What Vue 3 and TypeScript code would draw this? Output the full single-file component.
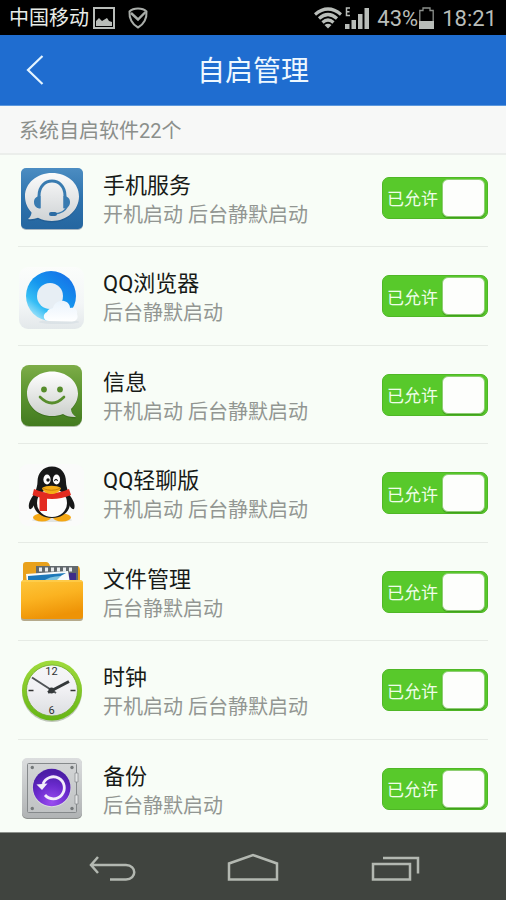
<script setup lang="ts">
import { reactive } from 'vue'

type IconName = 'service' | 'browser' | 'message' | 'penguin' | 'folder' | 'clock' | 'backup'

interface AppEntry {
  id: IconName
  name: string
  modes: string
  allowed: boolean
}

const total = 22
const apps = reactive<AppEntry[]>([
  { id: 'service', name: '手机服务', modes: '开机启动 后台静默启动', allowed: true },
  { id: 'browser', name: 'QQ浏览器', modes: '后台静默启动', allowed: true },
  { id: 'message', name: '信息', modes: '开机启动 后台静默启动', allowed: true },
  { id: 'penguin', name: 'QQ轻聊版', modes: '开机启动 后台静默启动', allowed: true },
  { id: 'folder', name: '文件管理', modes: '后台静默启动', allowed: true },
  { id: 'clock', name: '时钟', modes: '开机启动 后台静默启动', allowed: true },
  { id: 'backup', name: '备份', modes: '后台静默启动', allowed: true },
])
</script>

<template>
  <div class="screen">
    <div class="status">
      <span class="carrier">中国移动</span>
      <svg class="ic-photo" width="22" height="22" viewBox="0 0 22 22" aria-hidden="true">
        <rect x="1" y="1" width="20" height="20" fill="none" stroke="#b9bdb9" stroke-width="2" />
        <path d="M3 19v-5l3-3 3 3 5-3 2 3 3 1v4z" fill="#b9bdb9" />
      </svg>
      <svg class="ic-shield" width="20" height="22" viewBox="0 0 20 22" aria-hidden="true">
        <path d="M10 1.500C13 1.500 16.500 2.500 18.500 4.500C19 11 16 17.500 10 20.500C4 17.500 1 11 1.500 4.500C3.500 2.500 7 1.500 10 1.500z" fill="none" stroke="#a9ada9" stroke-width="2" />
        <path d="M3 6l7 6.500L17.500 5" fill="none" stroke="#a9ada9" stroke-width="2.400" />
      </svg>
      <span class="spacer"></span>
      <svg width="28" height="22" viewBox="0 0 28 22" aria-hidden="true">
        <g fill="none" stroke="#b9bdb9" stroke-width="3.200">
          <path d="M1 7.500Q14 -3.500 27 7.500" />
          <path d="M5 11.500Q14 3.500 23 11.500" />
          <path d="M8.500 15.500Q14 10.500 19.500 15.500" />
        </g>
        <path d="M10.500 18Q14 15.500 17.500 18L14 21.500z" fill="#b9bdb9" />
      </svg>
      <svg class="ic-signal" width="26" height="22" viewBox="0 0 26 22" aria-hidden="true">
        <path d="M6 1H2.500V8.500H6M2.500 4.700H5.500" fill="none" stroke="#b9bdb9" stroke-width="1.500" />
        <path d="M1 17h4.500v5H1zM7.500 13H12v9H7.500zM14 7h4.500v15H14zM20.500 1H25v21h-4.500z" fill="#b9bdb9" />
      </svg>
      <span class="digits">43%</span>
      <svg class="ic-battery" width="15" height="22" viewBox="0 0 15 22" aria-hidden="true">
        <path d="M.8 21V3.500H4V1h7v2.500h3.200V21z" fill="none" stroke="#8c908c" stroke-width="1.300" />
        <path d="M0 14h15v8H0z" fill="#b9bdb9" />
      </svg>
      <span class="digits time">18:21</span>
    </div>

    <header class="bar">
      <button class="back" type="button" aria-label="返回">
        <svg width="18" height="30" viewBox="0 0 18 30" aria-hidden="true">
          <path d="M16.500 1L2 15l14.500 14" fill="none" stroke="#e4f4ff" stroke-width="2.200" />
        </svg>
      </button>
      <h1>自启管理</h1>
    </header>

    <h2 class="section">系统自启软件{{ total }}个</h2>

    <main class="scroll">
      <ul class="apps">
        <li v-for="app in apps" :key="app.id" class="row">
          <svg class="icon" viewBox="0 0 66 66" aria-hidden="true">
            <template v-if="app.id === 'service'">
              <defs>
                <linearGradient id="svcBg" x1="0" y1="0" x2="0" y2="1">
                  <stop offset="0" stop-color="#4c8dc2" /><stop offset=".5" stop-color="#2d72ad" /><stop offset="1" stop-color="#2566a0" />
                </linearGradient>
                <linearGradient id="svcBubble" x1="0" y1="0" x2="0" y2="1">
                  <stop offset="0" stop-color="#fbfbfb" /><stop offset="1" stop-color="#cfd3d5" />
                </linearGradient>
              </defs>
              <rect x="3" y="4" width="62" height="61" rx="5" fill="#a9b7c2" />
              <rect x="3" y="3" width="62" height="61" rx="5" fill="url(#svcBg)" />
              <path d="M34 9C49 9 61 19 61 32.500C61 46 49 57.500 34 57.500C29 57.500 24 56.500 20 54.300C17 55.600 13 56 10 55.500C12.500 53 13.500 50 13.500 48C9.500 44 7 38.500 7 32.500C7 19 19 9 34 9z" fill="#1d5488" opacity=".5" />
              <path d="M34 8C49 8 61 18 61 31.500C61 45 49 56 34 56C29 56 24 55 20 52.800C17 54 13 54.500 10 54C12.500 52 13.500 49.500 13.500 47.500C9.500 43 7 38 7 31.500C7 18 19 8 34 8z" fill="url(#svcBubble)" />
              <path d="M21 43V31C21 11 47 11 47 31V43" fill="none" stroke="#397bb0" stroke-width="3" />
              <path d="M22.500 31C18.500 31 16 33.500 16 37C16 41 18.500 43.500 22.500 43.500zM45.500 31C49.500 31 52 33.500 52 37C52 41 49.500 43.500 45.500 43.500z" fill="#397bb0" />
              <path d="M49 42Q46 48 37 49" fill="none" stroke="#397bb0" stroke-width="1.600" />
              <rect x="31" y="47" width="8" height="4" rx="2" fill="#2d6ca3" />
            </template>

            <template v-else-if="app.id === 'browser'">
              <defs>
                <linearGradient id="brTile" x1="0" y1="0" x2="0" y2="1">
                  <stop offset="0" stop-color="#fbfdfb" /><stop offset=".6" stop-color="#f3f6f7" /><stop offset="1" stop-color="#e3e8ea" />
                </linearGradient>
                <linearGradient id="brRing" x1=".9" y1=".1" x2=".2" y2="1">
                  <stop offset="0" stop-color="#1672e8" /><stop offset=".45" stop-color="#1596ee" /><stop offset=".75" stop-color="#35bdf5" /><stop offset="1" stop-color="#b5eafa" />
                </linearGradient>
                <linearGradient id="brCloud" x1="0" y1="0" x2="0" y2="1">
                  <stop offset="0" stop-color="#e9f3fc" /><stop offset="1" stop-color="#ffffff" />
                </linearGradient>
              </defs>
              <rect x="1" y="4" width="65" height="62" rx="9" fill="url(#brTile)" />
              <ellipse cx="41" cy="59" rx="20" ry="2" fill="#cfd9df" opacity=".5" />
              <circle cx="33" cy="33" r="25" fill="url(#brRing)" />
              <circle cx="32" cy="33" r="13" fill="#e7eef4" />
              <path d="M31 58C25 58 24 51 29 49C30 46 33 45 35 45C36 40 41 37 46 38C50 39 52 42 52 45C57 44 60 47 59 51C61 55 58 58.500 54 58.500z" fill="url(#brCloud)" />
            </template>

            <template v-else-if="app.id === 'message'">
              <defs>
                <linearGradient id="msgBg" x1="0" y1="0" x2="0" y2="1">
                  <stop offset="0" stop-color="#7dad48" /><stop offset=".45" stop-color="#5c9530" /><stop offset="1" stop-color="#437b20" />
                </linearGradient>
                <linearGradient id="msgBubble" x1="0" y1="0" x2="0" y2="1">
                  <stop offset="0" stop-color="#ffffff" /><stop offset="1" stop-color="#cbcfcb" />
                </linearGradient>
              </defs>
              <rect x="3" y="4" width="61" height="61" rx="8" fill="#b1bfa7" />
              <rect x="3" y="3" width="61" height="61" rx="8" fill="url(#msgBg)" />
              <path d="M34 11C48 11 60 20 60 32.500C60 39 57 44 53 48C53 51 55 54 58 56.500C53 56.500 48 55 45 53C41 54.500 38 55 34 55C20 55 9 45 9 32.500C9 20 20 11 34 11z" fill="#2f6015" opacity=".55" />
              <path d="M34 9.500C48 9.500 60 19 60 31.500C60 38 57 43 53 47C53 50 55 53 58 55C53 55.500 48 54 45 52C41 53.500 38 54 34 54C20 54 9 44 9 31.500C9 19 20 9.500 34 9.500z" fill="url(#msgBubble)" />
              <circle cx="26" cy="27.500" r="2.900" fill="#578d2c" />
              <circle cx="42" cy="27.500" r="2.900" fill="#578d2c" />
              <path d="M22 35Q34 47 46 35" fill="none" stroke="#578d2c" stroke-width="2.600" stroke-linecap="round" />
            </template>

            <template v-else-if="app.id === 'penguin'">
              <rect x="1" y="4" width="65" height="62" rx="9" fill="#fafbfa" />
              <ellipse cx="34" cy="60" rx="20" ry="2" fill="#e2e4e2" />
              <ellipse cx="24" cy="57.500" rx="9" ry="4" fill="#f4a713" />
              <ellipse cx="44" cy="57.500" rx="9" ry="4" fill="#f4a713" />
              <path d="M17 33C12 39 9.500 45 11.500 49C13.500 50 16 46 17 43zM50 33C55 39 58 45 56 49C54 50 51.500 46 50 43z" fill="#171818" />
              <path d="M34 6.500C43 6.500 48 13 48 22C48 28 52 34 52 43C52 52 44 58 34 58C24 58 15.500 52 15.500 43C15.500 34 19.500 28 19.500 22C19.500 13 25 6.500 34 6.500z" fill="#171818" />
              <ellipse cx="34" cy="43" rx="15" ry="14" fill="#fdfdfd" />
              <ellipse cx="29" cy="19.500" rx="3.600" ry="5" fill="#fff" />
              <ellipse cx="38.500" cy="19.500" rx="3.600" ry="5" fill="#fff" />
              <circle cx="30" cy="20" r="1.700" fill="#171818" />
              <path d="M36.500 21Q38 17.500 39.500 21" fill="none" stroke="#171818" stroke-width="1.200" />
              <path d="M16 29Q34 37 51 29L53 35Q34 43 14.500 35z" fill="#e32b20" />
              <path d="M21.500 37H29V51H21.500z" fill="#e32b20" />
              <path d="M24 28C28 25 39 25 43 28C42 32 37 34 33.500 34C30 34 25 32 24 28z" fill="#f5ad17" />
              <path d="M25 28.500Q33.500 32 42 28.500" fill="none" stroke="#b87506" stroke-width=".8" />
            </template>

            <template v-else-if="app.id === 'folder'">
              <defs>
                <linearGradient id="fdFront" x1="0" y1="0" x2=".3" y2="1">
                  <stop offset="0" stop-color="#fdc63b" /><stop offset=".5" stop-color="#fbb321" /><stop offset="1" stop-color="#ee9306" />
                </linearGradient>
              </defs>
              <path d="M5 24V6Q5 3 8 3H28Q31 3 32 7H59Q62 7 62 12V24z" fill="#e9a11b" />
              <path d="M18 7H60V25H18z" fill="#62696d" />
              <path d="M21 8.500h3v4h-3zM27 8.500h3v4h-3zM33 8.500h3v4h-3zM39 8.500h3v4h-3zM45 8.500h3v4h-3zM51 8.500h3v4h-3z" fill="#e9edef" />
              <path d="M51 14h7v9h-7z" fill="#3d2c88" />
              <path d="M8 15L50 12L52 24H9z" fill="#f8fbfc" />
              <path d="M10 17L48 14L39 19Q31 20 27 23H10z" fill="#1d78b9" />
              <path d="M24 23Q31 17 43 17L37 23z" fill="#7ec3df" />
              <rect x="3" y="22" width="62" height="40" rx="3" fill="#b5aa8c" />
              <rect x="3" y="21" width="62" height="39" rx="3" fill="url(#fdFront)" />
              <path d="M4 22H64" stroke="#ffd760" stroke-width="1" />
            </template>

            <template v-else-if="app.id === 'clock'">
              <defs>
                <linearGradient id="ckRim" x1="0" y1="0" x2="0" y2="1">
                  <stop offset="0" stop-color="#a0db3c" /><stop offset="1" stop-color="#65b514" />
                </linearGradient>
                <linearGradient id="ckFace" x1="0" y1="0" x2="0" y2="1">
                  <stop offset="0" stop-color="#f6f7f8" /><stop offset=".5" stop-color="#f0f0f3" /><stop offset="1" stop-color="#dcdee1" />
                </linearGradient>
              </defs>
              <circle cx="34" cy="35" r="30" fill="#bfc7ba" />
              <circle cx="34" cy="33.500" r="30" fill="url(#ckRim)" />
              <circle cx="34" cy="33.500" r="25.500" fill="url(#ckFace)" stroke="#6fa82a" stroke-width=".8" />
              <text x="33.500" y="18" class="dial">12</text>
              <text x="33.500" y="57" class="dial">6</text>
              <path d="M10.500 33.500h5M52.500 33.500h5" stroke="#333" stroke-width="1.500" />
              <path d="M14 20.500L38 36" stroke="#505457" stroke-width="2" />
              <path d="M30 35.500L51 24.500" stroke="#34383a" stroke-width="3" />
              <circle cx="33.500" cy="33.500" r="3" fill="#34383a" />
            </template>

            <template v-else>
              <defs>
                <linearGradient id="bkBox" x1="0" y1="0" x2="0" y2="1">
                  <stop offset="0" stop-color="#dcdedf" /><stop offset="1" stop-color="#b0b3b4" />
                </linearGradient>
                <linearGradient id="bkDoor" x1="0" y1="0" x2="0" y2="1">
                  <stop offset="0" stop-color="#d3d5d6" /><stop offset="1" stop-color="#c0c3c4" />
                </linearGradient>
                <radialGradient id="bkDisc" cx=".5" cy=".9" r=".8">
                  <stop offset="0" stop-color="#9a4cf0" /><stop offset=".6" stop-color="#6829cb" /><stop offset="1" stop-color="#4c1ea6" />
                </radialGradient>
              </defs>
              <rect x="4" y="3" width="60" height="60" rx="5" fill="#8d908e" />
              <rect x="4" y="2" width="60" height="60" rx="5" fill="url(#bkBox)" />
              <rect x="9.500" y="7.500" width="49" height="49" rx="1" fill="url(#bkDoor)" stroke="#85898b" />
              <g fill="#74787a">
                <circle cx="14.300" cy="11.500" r="1.700" /><circle cx="54" cy="11.500" r="1.700" />
                <circle cx="14.300" cy="52.500" r="1.700" /><circle cx="54" cy="52.500" r="1.700" />
              </g>
              <path d="M57 17h3v9h-3zM57 39h3v9h-3z" fill="#e3e5e6" stroke="#84888a" stroke-width=".7" />
              <circle cx="33.700" cy="32" r="19.300" fill="#d9dade" />
              <circle cx="33.700" cy="31.500" r="18.800" fill="url(#bkDisc)" />
              <path d="M25 28A11 11 0 1 1 27 39" fill="none" stroke="#f2eefa" stroke-width="2.800" />
              <path d="M18.500 28.500L29.500 27.500L24 34z" fill="#f2eefa" />
            </template>
          </svg>

          <div class="info">
            <h3>{{ app.name }}</h3>
            <p>{{ app.modes }}</p>
          </div>

          <label class="toggle" :class="{ off: !app.allowed }">
            <span>已允许</span>
            <input v-model="app.allowed" type="checkbox" role="switch" />
          </label>
        </li>
      </ul>
    </main>

    <nav class="keys">
      <button type="button" aria-label="后退">
        <svg width="52" height="32" viewBox="0 0 52 32" aria-hidden="true">
          <path d="M12 6L5 14l7 8M5 14H40C51 14 51 28.500 40 28.500H24" />
        </svg>
      </button>
      <button type="button" aria-label="主屏幕">
        <svg width="52" height="32" viewBox="0 0 52 32" aria-hidden="true">
          <path d="M2 28.500V12.500L26 4L50 12.500V28.500z" />
        </svg>
      </button>
      <button type="button" aria-label="最近任务">
        <svg width="52" height="32" viewBox="0 0 52 32" aria-hidden="true">
          <path d="M5 13H42V28.500H5zM15 7H50V22.500" />
        </svg>
      </button>
    </nav>
  </div>
</template>

<style>
body {
  margin: 0;
  background: #f8fdf7;
}
</style>

<style scoped>
.screen {
  display: flex;
  flex-direction: column;
  height: 100vh;
  overflow: hidden;
  background: #f8fdf7;
  color: #171a17;
  font-family: Roboto, "Noto Sans CJK SC", sans-serif;
}

h1,
h2,
h3,
p,
ul {
  margin: 0;
  padding: 0;
  font-weight: 400;
}

button {
  padding: 0;
  border: 0;
  background: none;
  cursor: pointer;
}

svg {
  display: block;
  flex: none;
}

.status {
  display: flex;
  align-items: center;
  flex: none;
  height: 35px;
  padding: 0 9px;
  background: #000;
}

.carrier {
  color: #e8ece8;
  font-size: 20px;
  line-height: 36px;
}

.ic-photo {
  margin-left: 4px;
}

.ic-shield {
  margin-left: 13px;
}

.spacer {
  flex: 1;
}

.ic-signal {
  margin: 0 7px 0 2px;
}

.digits {
  padding-top: 2px;
  color: #b9bdb9;
  font-size: 22px;
  line-height: 36px;
}

.ic-battery {
  margin: 0 8px 0 1px;
}

.bar {
  display: grid;
  grid-template-columns: 70px 1fr 70px;
  align-items: center;
  flex: none;
  height: 70px;
  border-bottom: 1px solid #5c98dd;
  background: #1f6dd0;
}

.back {
  display: grid;
  place-items: center;
  height: 70px;
}

.bar h1 {
  padding-top: 4px;
  color: #eef8ff;
  font-size: 28px;
  line-height: 40px;
  text-align: center;
}

.section {
  flex: none;
  padding: 4px 19px 0;
  border-bottom: 2px solid #ebeeeb;
  background: #f7f8f7;
  color: #8b8f8b;
  font-size: 20px;
  line-height: 43px;
}

.scroll {
  flex: 1;
  min-height: 0;
  overflow-y: auto;
  scrollbar-width: none;
}

.apps {
  margin-top: -6px;
  padding: 0 18px;
  list-style: none;
}

.row {
  display: flex;
  align-items: center;
  gap: 19px;
  box-sizing: border-box;
  height: 98px;
  border-bottom: 1px solid #e6ebe5;
}

.row:nth-child(even) {
  height: 99px;
}

.icon {
  width: 66px;
  height: 66px;
}

.dial {
  fill: #2e3133;
  font-size: 11px;
  text-anchor: middle;
}

.info {
  flex: 1;
  min-width: 0;
  padding-top: 4px;
}

.info h3 {
  font-size: 22px;
  line-height: 30px;
}

.info p {
  color: #929692;
  font-size: 20px;
  line-height: 28px;
  white-space: nowrap;
}

.toggle {
  display: flex;
  align-items: center;
  justify-content: space-between;
  box-sizing: border-box;
  flex: none;
  width: 106px;
  height: 42px;
  padding: 0 2px 0 4px;
  border: 1px solid #4fb726;
  border-radius: 7px;
  background: #58c92b;
  color: #effde9;
  font-size: 17px;
  cursor: pointer;
}

.toggle.off {
  flex-direction: row-reverse;
  padding: 0 4px 0 2px;
  border-color: #a5aaa5;
  background: #b5bab5;
}

.toggle input {
  appearance: none;
  box-sizing: border-box;
  width: 43px;
  height: 38px;
  margin: 0;
  border: 1px solid #8fce74;
  border-radius: 6px;
  background: #fdfefc;
  box-shadow: 0 1px 1px #3f9c1c;
  cursor: pointer;
}

.keys {
  display: grid;
  grid-template-columns: repeat(3, 1fr);
  flex: none;
  padding: 0 42px;
  border-top: 1px solid #8d918c;
  background: #40443f;
}

.keys button {
  display: grid;
  place-items: center;
  height: 67px;
}

.keys path {
  fill: none;
  stroke: #b3b8b1;
  stroke-width: 2.5px;
}
</style>
